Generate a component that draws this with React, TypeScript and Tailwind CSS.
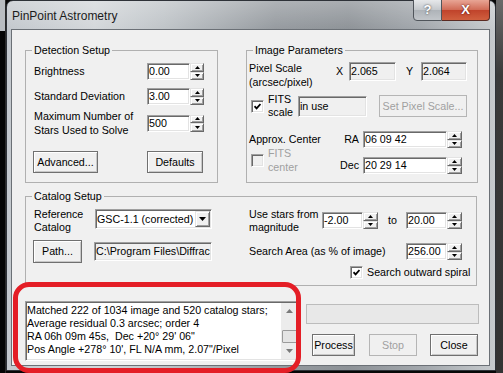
import React from 'react';

const sunken =
  'border border-t-[#a0a0a0] border-l-[#a0a0a0] border-b-white border-r-white shadow-[inset_1px_1px_0_#696969,inset_-1px_-1px_0_#e3e3e3]';
const raised =
  'border border-t-[#e3e3e3] border-l-[#e3e3e3] border-b-[#696969] border-r-[#696969] shadow-[inset_1px_1px_0_#fff,inset_-1px_-1px_0_#a0a0a0]';

function Arrow({ down, w = 5, h = 3, color = '#000' }: { down?: boolean; w?: number; h?: number; color?: string }) {
  return (
    <svg width={w} height={h} viewBox={`0 0 ${w} ${h}`}>
      <path d={down ? `M0 0H${w}L${w / 2} ${h}Z` : `M0 ${h}H${w}L${w / 2} 0Z`} fill={color} />
    </svg>
  );
}

function Spin({ value, field, btn }: { value: string; field: string; btn: string }) {
  return (
    <div className="flex h-[17px]">
      <div className={`${sunken} ${field} flex items-center bg-white pl-[1px]`}>{value}</div>
      <div className={`flex flex-col ${btn}`}>
        <div className={`${raised} flex flex-1 items-center justify-center bg-[#f0f0f0]`}>
          <Arrow />
        </div>
        <div className={`${raised} flex flex-1 items-center justify-center bg-[#f0f0f0]`}>
          <Arrow down />
        </div>
      </div>
    </div>
  );
}

function Btn({ label, cls, disabled }: { label: string; cls: string; disabled?: boolean }) {
  return (
    <div
      className={`flex items-center justify-center bg-[#f0f0f0] ${
        disabled
          ? 'border border-[#b5b5b5] text-[#a0a0a0]'
          : 'border border-[#707070] shadow-[inset_1px_1px_0_#fff,inset_-1px_-1px_0_#c8c8c8]'
      } ${cls}`}
    >
      {label}
    </div>
  );
}

function Check({ checked, disabled }: { checked?: boolean; disabled?: boolean }) {
  return (
    <div
      className={`flex h-[13px] w-[13px] shrink-0 items-center justify-center ${sunken} ${
        disabled ? 'bg-[#f0f0f0]' : 'bg-white'
      }`}
    >
      {checked && (
        <svg width="7" height="7" viewBox="0 0 7 7">
          <path d="M0.5 3.2L2.6 5.4L6.5 1" fill="none" stroke="#000" strokeWidth="1.8" />
        </svg>
      )}
    </div>
  );
}

function Group({ title, cls, children }: { title: string; cls: string; children: React.ReactNode }) {
  return (
    <fieldset className={`border border-[#b0b0b0] ${cls}`}>
      <legend className="ml-[6px] px-[2px] leading-[13px]">{title}</legend>
      {children}
    </fieldset>
  );
}

function TitleBar() {
  return (
    <div className="flex h-[28px]">
      <span className="self-center pl-[5px] pt-[2px] text-[12px] text-[#1b1b1b]">PinPoint Astrometry</span>
      <div className="-mt-[2px] ml-auto mr-[5px] flex self-start">
        <div className="flex h-[22px] w-[29px] items-center justify-center rounded-bl-[4px] border border-[#50555b] bg-[linear-gradient(180deg,#e6e8ea,#c3c7cb_50%,#aeb3b8_51%,#c2c6ca)] text-[13px] font-bold text-white [text-shadow:0_0_2px_#333]">
          ?
        </div>
        <div className="flex h-[22px] w-[48px] items-center justify-center rounded-br-[4px] border border-l-0 border-[#5a2a22] bg-[linear-gradient(180deg,#e8a595,#d06a55_50%,#c0432b_51%,#d0603f)] text-[13px] font-bold text-white [text-shadow:0_0_2px_#400]">
          X
        </div>
      </div>
    </div>
  );
}

export default function App() {
  return (
    <div className="relative flex h-[373px] w-[503px] overflow-hidden bg-[#070707] font-['Liberation_Sans',Arial,sans-serif] text-[10.7px] text-black">
      <div className="flex w-[6px] flex-col border-r border-[#2a2a2a]">
        <div className="h-[31px] bg-[#b9bdc1]" />
        <div className="flex-1 bg-[#050505]" />
      </div>

      <div className="flex h-[371px] w-[490px] flex-col rounded-t-[7px] border border-[#2e3238] bg-[linear-gradient(180deg,rgba(255,255,255,0.25),rgba(255,255,255,0)_8%),linear-gradient(90deg,#c3c8cd_0%,#d3d7da_18%,#bfc4c8_32%,#959a9f_55%,#8d9297_70%,#a2a7ac_85%,#c6cacd_100%)]">
        <TitleBar />

        <div className="ml-[4px] h-[337px] w-[479px] border border-[#6b7076] bg-[#f0f0f0]">
          <div className="flex flex-col pl-[13px] pt-[14px]">
            <div className="flex items-stretch gap-[28px]">
              <Group title="Detection Setup" cls="w-[193px]">
                <div className="flex flex-col pb-[9px] pl-[8px] pt-[6px]">
                  <div className="flex h-[17px] items-center">
                    <span className="w-[113px]">Brightness</span>
                    <Spin value="0.00" field="w-[43px]" btn="w-[14px]" />
                  </div>
                  <div className="mt-[8px] flex h-[17px] items-center">
                    <span className="w-[113px]">Standard Deviation</span>
                    <Spin value="3.00" field="w-[43px]" btn="w-[14px]" />
                  </div>
                  <div className="mt-[4px] flex h-[28px] items-center">
                    <span className="w-[113px] leading-[14px]">
                      Maximum Number of
                      <br />
                      Stars Used to Solve
                    </span>
                    <Spin value="500" field="w-[43px]" btn="w-[14px]" />
                  </div>
                  <div className="mt-[14px] flex">
                    <Btn label="Advanced..." cls="-ml-[1px] h-[22px] w-[65px]" />
                    <Btn label="Defaults" cls="ml-[49px] h-[22px] w-[56px]" />
                  </div>
                </div>
              </Group>

              <Group title="Image Parameters" cls="w-[232px]">
                <div className="flex flex-col pb-[7px] pl-[2px]">
                  <div className="mt-[4px] flex items-start">
                    <span className="w-[87px] leading-[14px]">
                      Pixel Scale
                      <br />
                      (arcsec/pixel)
                    </span>
                    <div className="mt-[1px] flex h-[19px] items-center">
                      <span className="w-[13px]">X</span>
                      <div className={`${sunken} flex h-[19px] w-[47px] items-center bg-[#f0f0f0] pl-[1px]`}>2.065</div>
                      <span className="ml-[10px] w-[15px]">Y</span>
                      <div className={`${sunken} flex h-[19px] w-[46px] items-center bg-[#f0f0f0] pl-[1px]`}>2.064</div>
                    </div>
                  </div>
                  <div className="mt-[3px] flex h-[28px] items-center">
                    <div className="ml-[2px]">
                      <Check checked />
                    </div>
                    <span className="ml-[4px] w-[30px] leading-[13px]">
                      FITS
                      <br />
                      scale
                    </span>
                    <div className={`${sunken} flex h-[21px] w-[69px] items-center bg-[#f0f0f0] pl-[1px]`}>in use</div>
                    <Btn label="Set Pixel Scale..." cls="ml-[12px] h-[22px] w-[88px]" disabled />
                  </div>
                  <div className="mt-[11px] flex">
                    <div className="flex w-[88px] flex-col">
                      <span className="mt-[1px] leading-[14px]">Approx. Center</span>
                      <div className="flex h-[28px] items-center">
                        <div className="ml-[2px]">
                          <Check disabled />
                        </div>
                        <span className="ml-[4px] leading-[14px] text-[#a0a0a0]">
                          FITS
                          <br />
                          center
                        </span>
                      </div>
                    </div>
                    <div className="flex flex-col">
                      <div className="flex h-[17px] items-center">
                        <span className="mr-[4px] w-[22px] text-right">RA</span>
                        <Spin value="06 09 42" field="w-[84px]" btn="w-[15px]" />
                      </div>
                      <div className="mt-[9px] flex h-[17px] items-center">
                        <span className="mr-[4px] w-[22px] text-right">Dec</span>
                        <Spin value="20 29 14" field="w-[84px]" btn="w-[15px]" />
                      </div>
                    </div>
                  </div>
                </div>
              </Group>
            </div>

            <Group title="Catalog Setup" cls="mt-[7px] w-[452px]">
              <div className="flex pb-[6px]">
                <div className="flex flex-col pl-[8px]">
                  <div className="mt-[5px] flex items-start">
                    <span className="w-[61px] leading-[13px]">
                      Reference
                      <br />
                      Catalog
                    </span>
                    <div className={`${sunken} mt-[1px] flex h-[20px] w-[117px] items-center bg-white pl-[1px]`}>
                      <span className="flex-1 overflow-hidden whitespace-nowrap">GSC-1.1 (corrected)</span>
                      <div className={`${raised} mr-[1px] flex h-[16px] w-[15px] shrink-0 items-center justify-center bg-[#f0f0f0]`}>
                        <Arrow down w={7} h={4} />
                      </div>
                    </div>
                  </div>
                  <div className="mt-[6px] flex items-center">
                    <Btn label="Path..." cls="-ml-[1px] h-[23px] w-[49px]" />
                    <div className={`${sunken} ml-[12px] flex h-[19px] w-[118px] items-center overflow-hidden whitespace-nowrap bg-[#f0f0f0] pl-[1px]`}>
                      C:\Program Files\Diffrac
                    </div>
                  </div>
                </div>
                <div className="ml-[37px] flex flex-col">
                  <div className="mt-[5px] flex items-start">
                    <span className="w-[73px] leading-[13px]">
                      Use stars from
                      <br />
                      magnitude
                    </span>
                    <div className="mt-[4px] flex h-[17px] items-center">
                      <Spin value="-2.00" field="w-[41px]" btn="w-[15px]" />
                      <span className="ml-[10px] w-[18px]">to</span>
                      <Spin value="20.00" field="w-[41px]" btn="w-[15px]" />
                    </div>
                  </div>
                  <div className="mt-[9px] flex h-[17px] items-center">
                    <span className="w-[157px]">Search Area (as % of image)</span>
                    <Spin value="256.00" field="w-[41px]" btn="w-[15px]" />
                  </div>
                  <div className="mt-[6px] flex h-[13px] items-center">
                    <div className="ml-[101px]">
                      <Check checked />
                    </div>
                    <span className="ml-[4px]">Search outward spiral</span>
                  </div>
                </div>
              </div>
            </Group>

            <div className="mt-[15px] flex">
              <div className={`${sunken} flex h-[60px] w-[274px] bg-white`}>
                <div className="flex-1 whitespace-nowrap pl-[1px] pt-[2px] leading-[13px]">
                  Matched 222 of 1034 image and 520 catalog stars;
                  <br />
                  Average residual 0.3 arcsec; order 4
                  <br />
                  RA 06h 09m 45s,&nbsp; Dec +20° 29' 06"
                  <br />
                  Pos Angle +278° 10', FL N/A mm, 2.07"/Pixel
                </div>
                <div className="my-[1px] mr-[1px] flex w-[16px] flex-col bg-[#ececec]">
                  <div className="flex h-[16px] items-center justify-center">
                    <Arrow w={7} h={4} color="#7a7a7a" />
                  </div>
                  <div className="flex flex-1 flex-col">
                    <div className="mx-auto mt-auto h-[13px] w-[15px] rounded-[1px] border border-[#9a9a9a] bg-[#e4e4e4]" />
                  </div>
                  <div className="flex h-[16px] items-center justify-center">
                    <Arrow down w={7} h={4} color="#7a7a7a" />
                  </div>
                </div>
              </div>
              <div className="ml-[7px] flex w-[173px] flex-col">
                <div className="mt-[3px] h-[20px] w-[173px] border border-[#bcbcbc] bg-[#e8e8e8]" />
                <div className="mt-[10px] flex">
                  <Btn label="Process" cls="ml-[6px] h-[22px] w-[43px]" />
                  <Btn label="Stop" cls="ml-[14px] h-[22px] w-[48px]" disabled />
                  <Btn label="Close" cls="ml-[13px] h-[22px] w-[48px]" />
                </div>
              </div>
            </div>
          </div>
        </div>
      </div>

      <div className="w-[7px] bg-[linear-gradient(180deg,#6a6a6a,#3a3a3a_20%,#333)]" />

      <div className="pointer-events-none absolute left-[13px] top-[282px] h-[91px] w-[288px] rounded-[16px] border-[5px] border-[#e41e26]" />
    </div>
  );
}
